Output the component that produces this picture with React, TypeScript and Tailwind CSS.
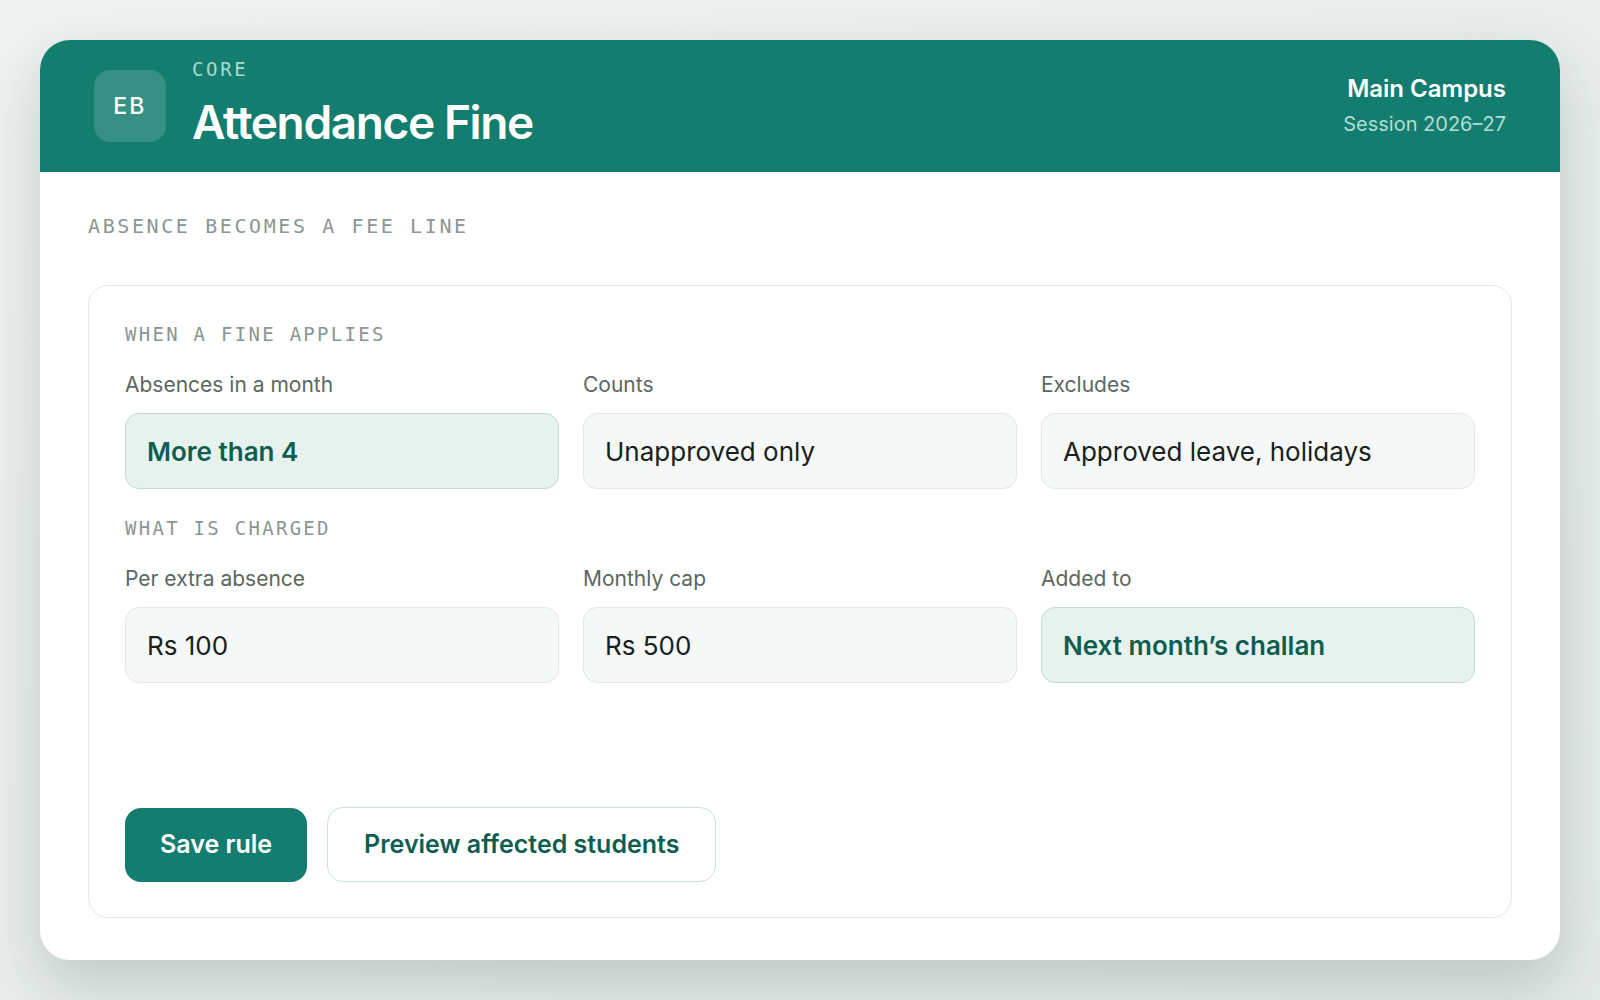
const sans = "font-['Inter','Liberation_Sans',sans-serif]";
const mono = "font-['DejaVu_Sans_Mono','Liberation_Mono',monospace]";

type Field = {
  label: string;
  value: string;
  accent?: boolean;
};

const whenFields: Field[] = [
  { label: "Absences in a month", value: "More than 4", accent: true },
  { label: "Counts", value: "Unapproved only" },
  { label: "Excludes", value: "Approved leave, holidays" },
];

const chargeFields: Field[] = [
  { label: "Per extra absence", value: "Rs 100" },
  { label: "Monthly cap", value: "Rs 500" },
  { label: "Added to", value: "Next month’s challan", accent: true },
];

function SectionLabel({ children }: { children: React.ReactNode }) {
  return (
    <div
      className={`${mono} text-[19px] leading-[25px] tracking-[0.12em] text-[#8a9692]`}
    >
      {children}
    </div>
  );
}

function FieldRow({ fields }: { fields: Field[] }) {
  return (
    <div className="grid grid-cols-3 gap-6 mt-6">
      {fields.map((f) => (
        <div key={f.label}>
          <div className="text-[21px] leading-[28px] text-[#5b6763]">
            {f.label}
          </div>
          <div
            className={
              f.accent
                ? "mt-[14px] h-[76px] rounded-[14px] border border-[#bfdcd5] bg-[#e7f2ef] px-[21px] flex items-center text-[26px] font-semibold text-[#0e5e50]"
                : "mt-[14px] h-[76px] rounded-[14px] border border-[#e2e8e6] bg-[#f6f8f7] px-[21px] flex items-center text-[26px] text-[#17211e]"
            }
          >
            {f.value}
          </div>
        </div>
      ))}
    </div>
  );
}

export default function App() {
  return (
    <div
      className={`${sans} min-h-screen bg-gradient-to-br from-[#eef2f1] to-[#e4eae8] p-10`}
    >
      <div className="h-[920px] rounded-[30px] bg-white shadow-[0_26px_60px_rgba(30,60,52,0.20)] overflow-hidden flex flex-col">
        {/* Header */}
        <header className="h-[132px] shrink-0 bg-[#137d6f] px-[54px] flex items-center justify-between">
          <div className="flex items-center gap-[26px]">
            <div className="w-[72px] h-[72px] rounded-[16px] bg-white/15 flex items-center justify-center text-[23px] font-medium tracking-[0.1em] text-white">
              EB
            </div>
            <div className="-mt-[6px]">
              <div
                className={`${mono} text-[19px] leading-[24px] tracking-[0.14em] text-[#a9dbce]`}
              >
                CORE
              </div>
              <h1 className="mt-[14px] text-[46px] leading-[54px] font-semibold tracking-[-0.03em] text-white">
                Attendance Fine
              </h1>
            </div>
          </div>
          <div className="text-right -mt-[2px]">
            <div className="text-[24px] leading-[32px] font-semibold text-white">
              Main Campus
            </div>
            <div className="mt-[6px] text-[20px] leading-[26px] text-[#b2ddd2]">
              Session 2026–27
            </div>
          </div>
        </header>

        {/* Body */}
        <div className="flex-1 px-12 pt-[42px] pb-[42px] flex flex-col">
          <div
            className={`${mono} text-[20px] leading-[24px] tracking-[0.13em] text-[#8a9692]`}
          >
            ABSENCE BECOMES A FEE LINE
          </div>

          <div className="mt-[47px] flex-1 rounded-[20px] border border-[#e3e9e7] pt-9 px-9 pb-[35px] flex flex-col">
            <SectionLabel>WHEN A FINE APPLIES</SectionLabel>
            <FieldRow fields={whenFields} />

            <div className="mt-[27px]">
              <SectionLabel>WHAT IS CHARGED</SectionLabel>
            </div>
            <FieldRow fields={chargeFields} />

            {/* Actions */}
            <div className="mt-auto flex items-center gap-5">
              <button className="h-[74px] px-[35px] rounded-[16px] bg-[#137d6f] text-white text-[25px] font-semibold">
                Save rule
              </button>
              <button className="h-[75px] px-[36px] rounded-[16px] border border-[#cfe1dc] bg-white text-[#0e5e50] text-[25px] font-semibold">
                Preview affected students
              </button>
            </div>
          </div>
        </div>
      </div>
    </div>
  );
}
